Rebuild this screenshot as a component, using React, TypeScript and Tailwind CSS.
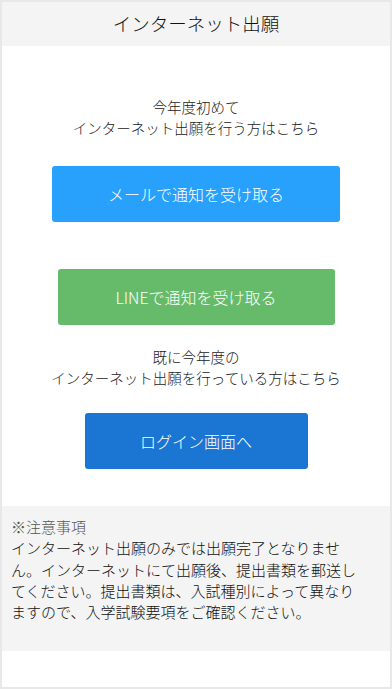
export default function App() {
  return (
    <div
      className="h-[689px] w-[392px] border-2 border-[#e8e8e8] bg-white font-light text-[#222]"
      style={{ fontFamily: '"Noto Sans CJK JP", "Noto Sans", sans-serif' }}
    >
      <header className="flex h-[44px] items-center justify-center bg-[#f4f4f4]">
        <h1 className="text-[18.5px] font-light text-[#111]">インターネット出願</h1>
      </header>

      <main className="flex flex-col items-center">
        <p className="mt-[50px] text-center text-[14.5px] leading-[21px]">
          今年度初めて
          <br />
          インターネット出願を行う方はこちら
        </p>

        <button className="mt-[28px] h-[56px] w-[288px] rounded-[3px] bg-[#27a1fc] text-[16px] text-white">
          メールで通知を受け取る
        </button>

        <button className="mt-[47px] h-[56px] w-[277px] rounded-[3px] bg-[#66bb6a] text-[16px] text-white">
          LINEで通知を受け取る
        </button>

        <p className="mt-[21px] text-center text-[14.5px] leading-[21px]">
          既に今年度の
          <br />
          インターネット出願を行っている方はこちら
        </p>

        <button className="mt-[25px] h-[56px] w-[223px] rounded-[3px] bg-[#1a76d2] text-[16px] text-white">
          ログイン画面へ
        </button>
      </main>

      <section className="mt-[37px] bg-[#f4f4f4] pb-[29px] pl-[9px] pr-[30px] pt-[10px] text-[15px] leading-[21.25px] text-[#111]">
        <p className="text-[#555]">※注意事項</p>
        <p>
          インターネット出願のみでは出願完了となりません。インターネットにて出願後、提出書類を郵送してください。提出書類は、入試種別によって異なりますので、入学試験要項をご確認ください。
        </p>
      </section>
    </div>
  )
}
